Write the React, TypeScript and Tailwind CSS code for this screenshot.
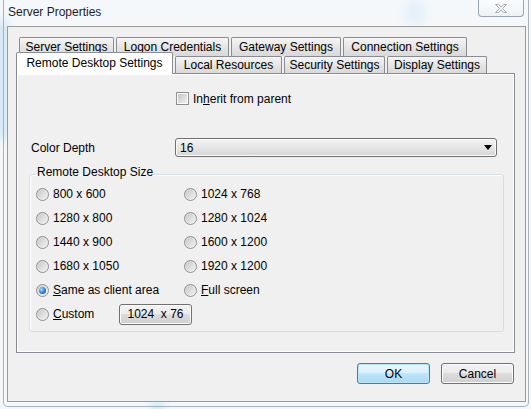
import type { ReactNode } from 'react';

const tabBase =
  'flex items-center justify-center border border-b-0 border-[#898c95] rounded-t-[2px] text-[12px] leading-none text-black';
const tabIdle = 'bg-[linear-gradient(#f5f5f5,#e4e4e4_55%,#d9d9d9)]';

function Radio({ checked = false }: { checked?: boolean }) {
  return (
    <span className="flex h-[13px] w-[13px] shrink-0 items-center justify-center rounded-full border border-[#8f8f8f] bg-[linear-gradient(135deg,#d0d0d0,#f7f7f7)]">
      {checked ? (
        <span className="h-[7px] w-[7px] rounded-full bg-[radial-gradient(circle_at_35%_35%,#9be2ff,#2a7fd4_55%,#0e3f8f)]" />
      ) : (
        <span className="h-[9px] w-[9px] rounded-full bg-[linear-gradient(135deg,#c8c8c8,#f2f2f2)]" />
      )}
    </span>
  );
}

function RadioItem({ label, checked }: { label: ReactNode; checked?: boolean }) {
  return (
    <div className="flex h-[24px] items-center gap-[4px]">
      <Radio checked={checked} />
      <span className="text-[12px] leading-none">{label}</span>
    </div>
  );
}

function WinButton({ children, focused = false, className = '' }: { children: ReactNode; focused?: boolean; className?: string }) {
  return (
    <div
      className={`flex shrink-0 items-center justify-center rounded-[3px] border text-[12px] leading-none text-black ${
        focused
          ? 'border-[#3c7fb1] bg-[linear-gradient(#eaf6fd,#d9f0fc_50%,#bee6fd_50%,#a7d9f5)] shadow-[inset_0_0_0_1px_#bde5fa]'
          : 'border-[#707070] bg-[linear-gradient(#f2f2f2,#ebebeb_50%,#dddddd_50%,#cfcfcf)] shadow-[inset_0_0_0_1px_#fcfcfc]'
      } ${className}`}
    >
      {children}
    </div>
  );
}

export default function App() {
  return (
    <div className="relative h-[409px] w-[531px] overflow-hidden bg-[#f4f8fb] font-['Liberation_Sans','Noto_Sans_CJK_KR',Arial,sans-serif] text-black">
      {/* glass blur behind the frame */}
      <div className="pointer-events-none absolute -left-[6px] top-[20px] h-[120px] w-[16px] rounded-full bg-[#d6e7f5] blur-[4px]" />
      <div className="pointer-events-none absolute left-[405px] top-[0px] h-[26px] w-[20px] rounded-full bg-[#e4f0f8] blur-[5px]" />
      <div className="pointer-events-none absolute left-[150px] top-[402px] h-[12px] w-[16px] rounded-full bg-[#c8f0f6] blur-[3px]" />

      <div className="relative ml-[3px] h-[407px] w-[526px] rounded-b-[5px] border-x border-b border-[#a6b2bf]">
        {/* title bar */}
        <div className="flex h-[26px] items-start justify-between">
          <div className="pl-[4px] pt-[4px] text-[12px] leading-[16px] text-[#1e1e1e]">Server Properties</div>
          <div className="mr-[4px] flex h-[17px] w-[46px] items-center justify-center rounded-b-[4px] border border-t-0 border-[#9aa5b1] bg-[linear-gradient(#fbfcfd,#eef2f5)]">
            <svg width="14" height="11" viewBox="0 0 14 11">
              <path
                d="M1.5 1.5h3l2.5 2.5 2.5-2.5h3l-4 4 4 4h-3L7 7l-2.5 2.5h-3l4-4z"
                fill="#f4f6f8"
                stroke="#a3abb5"
                strokeWidth="1"
                strokeLinejoin="round"
              />
            </svg>
          </div>
        </div>

        {/* client area */}
        <div className="ml-[3px] h-[376px] w-[519px] border border-[#9a9a9a] bg-[#f0f0f0] pl-[8px] pt-[10px]">
          {/* tab rows */}
          <div className="flex h-[19px] gap-[2px] pl-[3px]">
            <div className={`${tabBase} ${tabIdle} w-[95px]`}>Server Settings</div>
            <div className={`${tabBase} ${tabIdle} w-[113px]`}>Logon Credentials</div>
            <div className={`${tabBase} ${tabIdle} w-[110px]`}>Gateway Settings</div>
            <div className={`${tabBase} ${tabIdle} w-[124px]`}>Connection Settings</div>
          </div>
          <div className="relative z-10 -mt-[4px] flex h-[22px] items-end gap-[2px]">
            <div className={`${tabBase} h-[22px] w-[157px] bg-white pb-[2px]`}>Remote Desktop Settings</div>
            <div className={`${tabBase} ${tabIdle} mb-[1px] h-[17px] w-[107px]`}>Local Resources</div>
            <div className={`${tabBase} ${tabIdle} mb-[1px] h-[17px] w-[101px]`}>Security Settings</div>
            <div className={`${tabBase} ${tabIdle} mb-[1px] h-[17px] w-[100px]`}>Display Settings</div>
          </div>

          {/* tab page */}
          <div className="-mt-[1px] h-[280px] w-[499px] border border-[#898c95] bg-[#f0f0f0] shadow-[inset_1px_1px_0_#ffffff,inset_-1px_-1px_0_#ffffff]">
            <div className="ml-[159px] mt-[18px] flex h-[13px] items-center gap-[4px]">
              <span className="flex h-[13px] w-[13px] items-center justify-center border border-[#8f8f8f] bg-white">
                <span className="h-[9px] w-[9px] bg-[linear-gradient(135deg,#c6c6c6,#efefef)]" />
              </span>
              <span className="text-[12px] leading-none">
                In<u>h</u>erit from parent
              </span>
            </div>

            <div className="ml-[14px] mt-[33px] flex h-[19px] items-center">
              <span className="w-[144px] text-[12px] leading-none">Color Depth</span>
              <div className="flex h-[19px] w-[322px] items-center justify-between rounded-[3px] border border-[#707070] bg-[linear-gradient(#f3f3f3,#e6e6e6_50%,#d6d6d6)] pl-[4px] pr-[4px] shadow-[inset_0_0_0_1px_#fbfbfb]">
                <span className="text-[12px] leading-none">16</span>
                <svg width="8" height="5" viewBox="0 0 8 5">
                  <path d="M0 0h8L4 5z" fill="#000" />
                </svg>
              </div>
            </div>

            <fieldset className="ml-[12px] mt-[9px] w-[475px] rounded-[3px] border border-[#d5dfe5] pb-[5px] pl-[6px] shadow-[inset_1px_1px_0_#ffffff]">
              <legend className="px-[1px] pb-[4px] text-[12px] leading-[12px]">Remote Desktop Size</legend>
              <div className="grid grid-cols-[148px_1fr]">
                <RadioItem label="800 x 600" />
                <RadioItem label="1024 x 768" />
                <RadioItem label="1280 x 800" />
                <RadioItem label="1280 x 1024" />
                <RadioItem label="1440 x 900" />
                <RadioItem label="1600 x 1200" />
                <RadioItem label="1680 x 1050" />
                <RadioItem label="1920 x 1200" />
                <RadioItem
                  checked
                  label={
                    <>
                      <u>S</u>ame as client area
                    </>
                  }
                />
                <RadioItem
                  label={
                    <>
                      <u>F</u>ull screen
                    </>
                  }
                />
                <div className="flex h-[24px] items-center">
                  <div className="flex w-[83px] shrink-0 items-center gap-[4px]">
                    <Radio />
                    <span className="text-[12px] leading-none">
                      <u>C</u>ustom
                    </span>
                  </div>
                  <WinButton className="h-[21px] w-[73px] whitespace-pre">{'1024  x 76'}</WinButton>
                </div>
              </div>
            </fieldset>
          </div>

          {/* dialog buttons */}
          <div className="mt-[10px] flex justify-end gap-[11px] pr-[11px]">
            <WinButton focused className="h-[21px] w-[73px]">
              OK
            </WinButton>
            <WinButton className="h-[21px] w-[73px]">Cancel</WinButton>
          </div>
        </div>
      </div>
    </div>
  );
}
